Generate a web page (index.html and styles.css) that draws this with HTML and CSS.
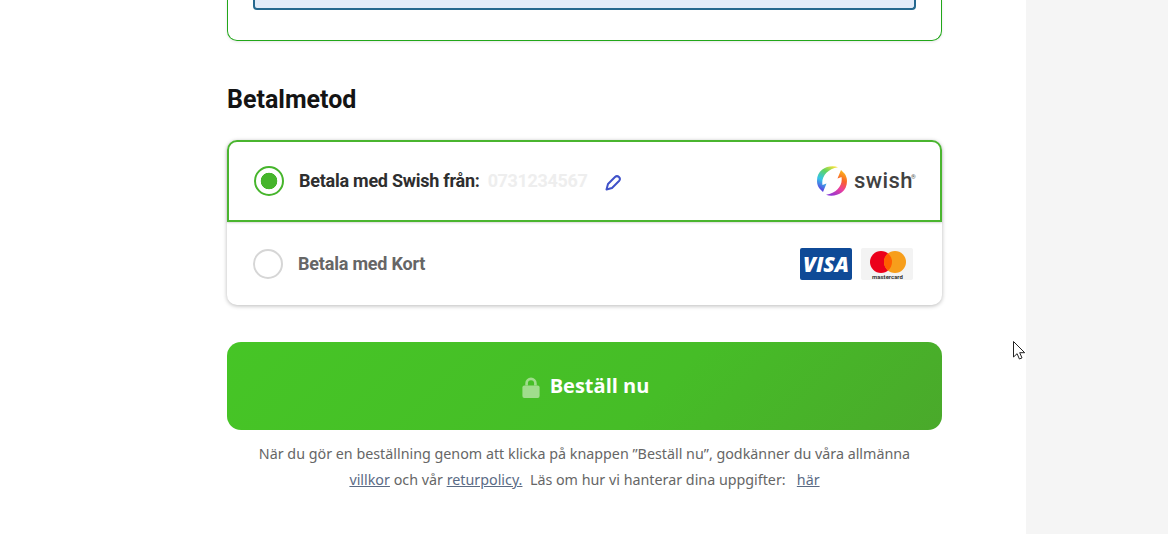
FILE: index.html
```html
<!DOCTYPE html>
<html lang="sv">
<head>
    <meta charset="UTF-8">
    <meta name="viewport" content="width=device-width, initial-scale=1.0">
    <title>Betalmetod</title>
    <link rel="stylesheet" href="styles.css">
</head>
<body>
    <main class="checkout">
        <div class="column">
            <div class="address-card">
                <div class="address-note"></div>
            </div>

            <h2 class="section-title">Betalmetod</h2>

            <div class="pay-options">
                <div class="pay-option selected">
                    <span class="radio checked"></span>
                    <span class="pay-label">Betala med Swish från:</span>
                    <span class="phone">0731234567</span>
                    <svg class="edit-icon" viewBox="0 0 16 16" width="16" height="16" fill="none" stroke="#3f51c9" stroke-width="2" stroke-linejoin="round">
                        <path d="M1.500 14.500 3 9 10 2a2.830 2.830 0 0 1 4 4l-7 7z"/>
                    </svg>
                    <div class="swish-logo">
                        <svg viewBox="0 0 32 32" width="32" height="32">
                            <defs>
                                <linearGradient id="swish-left" x1="0.8" y1="0" x2="0.35" y2="1">
                                    <stop offset="0" stop-color="#f3e23c"/>
                                    <stop offset="0.3" stop-color="#5fd35f"/>
                                    <stop offset="0.65" stop-color="#35c4e8"/>
                                    <stop offset="1" stop-color="#5a3fe0"/>
                                </linearGradient>
                                <linearGradient id="swish-right" x1="0.8" y1="0" x2="0.35" y2="1">
                                    <stop offset="0" stop-color="#8a35d8"/>
                                    <stop offset="0.4" stop-color="#ec3f9c"/>
                                    <stop offset="0.7" stop-color="#f9602a"/>
                                    <stop offset="1" stop-color="#fbb01c"/>
                                </linearGradient>
                            </defs>
                            <path d="M22 2.200C14-.5 1 3 1 16c0 3 1 5.500 2.500 7.500L7 27l3.500-8.500-4 1.500C5 12 11 4 22 2.200z" fill="url(#swish-left)"/>
                            <path d="M22 2.200C14-.5 1 3 1 16c0 3 1 5.500 2.500 7.500L7 27l3.500-8.500-4 1.500C5 12 11 4 22 2.200z" fill="url(#swish-right)" transform="rotate(180 16 16)"/>
                        </svg>
                        <span class="swish-word">swish</span><span class="swish-reg">®</span>
                    </div>
                </div>
                <div class="pay-option">
                    <span class="radio"></span>
                    <span class="pay-label muted">Betala med Kort</span>
                    <div class="card-logos">
                        <span class="visa">VISA</span>
                        <span class="mastercard">
                            <svg viewBox="0 0 36 23" width="36" height="23">
                                <circle cx="11" cy="11" r="11" fill="#eb001b"/>
                                <circle cx="25" cy="11" r="11" fill="#f79e1b"/>
                                <path d="M18 2.500a11 11 0 0 1 0 17 11 11 0 0 1 0-17z" fill="#ff5f00"/>
                            </svg>
                            <span class="mc-word">mastercard</span>
                        </span>
                    </div>
                </div>
            </div>

            <button class="order-btn">
                <svg viewBox="0 0 18 22" width="18" height="21" fill="#a0dd8c">
                    <path d="M3 9V6.500a6 6 0 0 1 12 0V9h-2.800V6.500a3.200 3.200 0 0 0-6.400 0V9z"/>
                    <rect x="0" y="9" width="18" height="13" rx="2"/>
                </svg>
                Beställ nu
            </button>

            <p class="terms">
                När du gör en beställning genom att klicka på knappen ”Beställ nu”, godkänner du våra allmänna<br>
                <a href="#">villkor</a> och vår <a href="#">returpolicy.</a>&nbsp; Läs om hur vi hanterar dina uppgifter: &nbsp;&nbsp;<a href="#">här</a>
            </p>
        </div>
    </main>
    <aside class="side-panel"></aside>

    <svg class="cursor" viewBox="0 0 13 20" width="13" height="20" fill="#fff" stroke="#222" stroke-width="1">
        <path d="M.5.500v15.500l3.600-3.300 2.300 5.300 2.600-1.100-2.300-5.200h5z"/>
    </svg>
</body>
</html>
```

FILE: styles.css
```css
html, body {
    height: 100%;
}

body {
    margin: 0;
    display: flex;
    overflow: hidden;
    background-color: #fff;
    color: #111;
    font-family: Roboto, Arial, sans-serif;
}

.checkout {
    width: 1026px;
    flex-shrink: 0;
}

.side-panel {
    flex: 1;
    background-color: #f5f5f5;
}

.column {
    width: 715px;
    margin-left: 227px;
}

.address-card {
    box-sizing: border-box;
    height: 42px;
    margin-top: -1px;
    padding: 0 25px;
    border: 1px solid #22a71a;
    border-top: none;
    border-radius: 0 0 10px 10px;
    box-shadow: 0 1px 3px rgba(0, 0, 0, 0.1);
}

.address-note {
    height: 9px;
    background: #e2ebf9;
    border: 2px solid #25688f;
    border-top: none;
    border-radius: 0 0 4px 4px;
}

.section-title {
    margin: 42px 0 24px;
    font-size: 25px;
    line-height: 33px;
    font-weight: 700;
    color: #141414;
}

.pay-options {
    border-radius: 10px;
    box-shadow: 0 1px 4px rgba(0, 0, 0, 0.28);
}

.pay-option {
    box-sizing: border-box;
    display: flex;
    align-items: center;
    height: 83px;
    padding: 0 29px 0 26px;
}

.pay-option.selected {
    height: 82px;
    padding-right: 25px;
    border: 2px solid #4ab52f;
    border-radius: 10px 10px 0 0;
    padding-left: 25px;
    box-shadow: 0 1px 2px rgba(0, 0, 0, 0.15);
}

.radio {
    box-sizing: border-box;
    width: 30px;
    height: 30px;
    border: 2px solid #d6d6d6;
    border-radius: 50%;
    flex-shrink: 0;
}

.radio.checked {
    border-color: #46b52c;
    background: radial-gradient(circle, #46b52c 0 8px, transparent 8.600px);
}

.pay-label {
    margin-left: 15px;
    margin-bottom: 2px;
    font-size: 18px;
    font-weight: 700;
    letter-spacing: -0.25px;
    color: #2e2e2e;
}

.pay-label.muted {
    margin-bottom: 0;
    letter-spacing: -0.2px;
    color: #666;
}

.phone {
    margin-left: 8px;
    margin-bottom: 2px;
    font-size: 18px;
    font-weight: 700;
    letter-spacing: -0.35px;
    color: #eee;
}

.edit-icon {
    margin-left: 18px;
    margin-top: 3px;
}

.swish-logo {
    margin-left: auto;
    display: flex;
    align-items: center;
}

.swish-word {
    width: 58px;
    margin-left: 6px;
    font-size: 22px;
    font-weight: 500;
    letter-spacing: 0.4px;
    color: #414141;
    line-height: 30px;
}

.swish-reg {
    width: 4px;
    margin-left: -1px;
    font-size: 6px;
    color: #555;
    margin-bottom: 10px;
}

.card-logos {
    margin-left: auto;
    display: flex;
    gap: 9px;
}

.visa {
    width: 52px;
    height: 32px;
    border-radius: 2px;
    background: #0f4a97;
    color: #fff;
    font-family: "Open Sans", sans-serif;
    font-size: 21px;
    font-weight: 800;
    font-style: italic;
    line-height: 32px;
    text-align: center;
}

.mastercard {
    width: 52px;
    height: 32px;
    border-radius: 2px;
    background: #f3f3f3;
    display: flex;
    flex-direction: column;
    align-items: center;
    padding: 3px 0 0 1px;
    box-sizing: border-box;
}

.mc-word {
    font-size: 6px;
    line-height: 6px;
    font-weight: 700;
    color: #333;
}

.order-btn {
    box-sizing: border-box;
    display: flex;
    align-items: center;
    justify-content: center;
    gap: 10px;
    width: 100%;
    height: 88px;
    margin-top: 37px;
    padding: 0 0 2px 2px;
    border: none;
    border-radius: 14px;
    background: linear-gradient(135deg, #46c526 0%, #46bd27 60%, #4aa92b 100%);
    color: #fff;
    font-family: "Open Sans", sans-serif;
    font-size: 20px;
    font-weight: 700;
    cursor: pointer;
}

.order-btn svg {
    margin-top: 4px;
}

.terms {
    margin: 11px 0 0;
    font-family: "Noto Sans", sans-serif;
    font-size: 14.3px;
    line-height: 26px;
    color: #666;
    text-align: center;
}

.terms a {
    color: #5b6b85;
}

.cursor {
    position: absolute;
    left: 1013px;
    top: 341px;
}
```
